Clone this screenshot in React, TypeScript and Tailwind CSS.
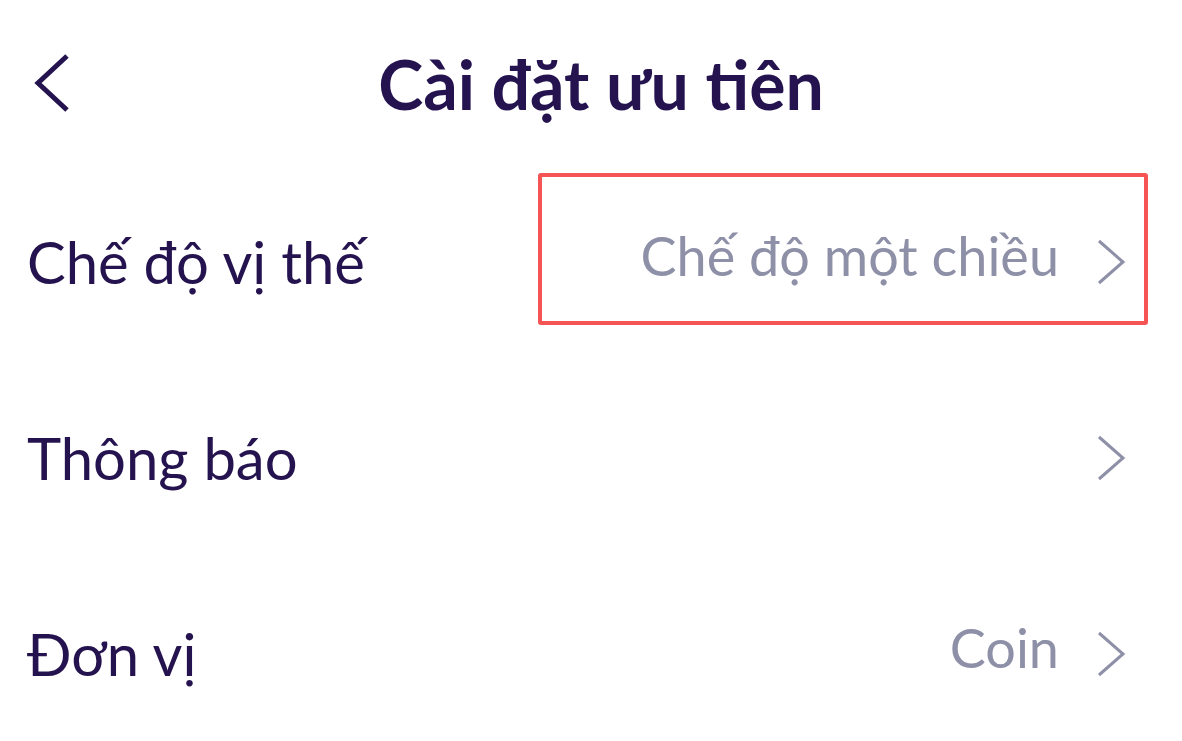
const rows = [
  { label: "Chế độ vị thế", value: "Chế độ một chiều", highlight: true },
  { label: "Thông báo", value: "" },
  { label: "Đơn vị", value: "Coin" },
];

function BackIcon() {
  return (
    <svg width="40" height="64" viewBox="0 0 40 64" fill="none">
      <path d="M37 6 L8 33 L37 60" stroke="currentColor" strokeWidth="5" />
    </svg>
  );
}

function NextIcon() {
  return (
    <svg width="30" height="50" viewBox="0 0 30 50" fill="none">
      <path d="M2 4 L26 25 L2 46" stroke="currentColor" strokeWidth="3" />
    </svg>
  );
}

export default function App() {
  return (
    <div className="h-[741px] w-full overflow-hidden bg-white font-['Lato',sans-serif] text-[#24134f]">
      <header className="relative flex h-[164px] items-center justify-center pl-[20px] pt-[4px]">
        <button className="absolute left-[30px] top-[50px] text-[#24134f]">
          <BackIcon />
        </button>
        <h1 className="text-[68px] font-bold leading-none">Cài đặt ưu tiên</h1>
      </header>

      <div className="flex flex-col">
        {rows.map((r) => (
          <div
            key={r.label}
            className="relative flex h-[196px] items-center justify-between pl-[27px] pr-[55px]"
          >
            <span className="text-[58px] leading-none">{r.label}</span>
            <div className="flex items-center gap-[38px] text-[#8e90a8]">
              {r.value && <span className="pb-[12px] text-[54px] leading-none">{r.value}</span>}
              <NextIcon />
            </div>
            {r.highlight && (
              <div className="absolute left-[538px] top-[9px] h-[152px] w-[610px] rounded-[3px] border-[4px] border-[#f65454]" />
            )}
          </div>
        ))}
      </div>
    </div>
  );
}
